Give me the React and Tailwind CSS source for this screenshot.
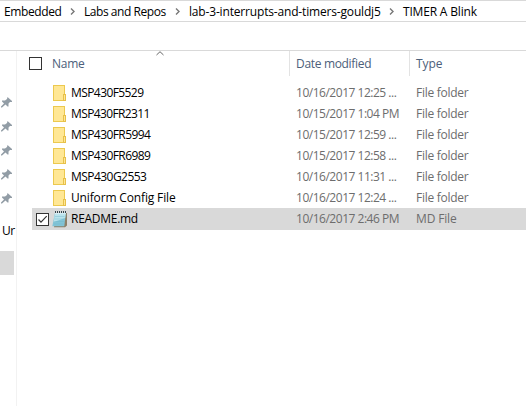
const files = [
  { name: 'MSP430F5529', date: '10/16/2017 12:25 ...', track: 'tracking-[-0.58px]', dateTrack: 'tracking-[-0.48px]' },
  { name: 'MSP430FR2311', date: '10/15/2017 1:04 PM', track: 'tracking-[-0.62px]', dateTrack: 'tracking-[-0.48px]' },
  { name: 'MSP430FR5994', date: '10/15/2017 12:59 ...', track: 'tracking-[-0.58px]', dateTrack: 'tracking-[-0.48px]' },
  { name: 'MSP430FR6989', date: '10/15/2017 12:58 ...', track: 'tracking-[-0.58px]', dateTrack: 'tracking-[-0.48px]' },
  { name: 'MSP430G2553', date: '10/16/2017 11:31 ...', track: 'tracking-[-0.54px]', dateTrack: 'tracking-[-0.48px]' },
  { name: 'Uniform Config File', date: '10/16/2017 12:24 ...', track: 'tracking-[-0.15px]', dateTrack: 'tracking-[-0.48px]' },
];

const pins = [0, 1, 2, 3, 4];

function Folder() {
  return (
    <svg width="13" height="16" viewBox="0 0 13 16" className="shrink-0">
      <rect x="0.5" y="0.5" width="11" height="15" fill="#ffe795" stroke="#ecc94f" />
      <rect x="10.5" y="9.5" width="2" height="6" fill="#ffe795" stroke="#e7c04a" />
    </svg>
  );
}

function Notepad() {
  return (
    <svg width="16" height="17" viewBox="0 0 16 17" className="shrink-0">
      <path d="M4 2H15V14.5L13 16.3H2Z" fill="#8d8069" />
      <path d="M3 2H13.8L12.3 15.3H0.3Z" fill="#82c4d6" />
      <path d="M3 2H13.8L13.2 7L1.8 11Z" fill="#b9e3ec" />
      <path d="M3 5.5H12.5M2.5 8H12M2.2 10.5H12M2 13H11.5" stroke="#6fb7cb" strokeWidth="0.4" />
      <path d="M3 1H14" stroke="#35464e" strokeWidth="2" strokeDasharray="1 1" />
      <path d="M3 2.7H14" stroke="#e9f7f9" strokeWidth="0.7" />
    </svg>
  );
}

function Pin() {
  return (
    <svg width="11" height="11" viewBox="0 0 11 11" className="block">
      <path d="M6.5 0L11 4V5H9L7.5 6.5V9.5H6.5L4.5 7.5L1 10.5H0V9.5L3 6.5L1 4.5V3.5H4L6 2Z" fill="#929da6" />
    </svg>
  );
}

function Chevron() {
  return (
    <svg width="5" height="7" viewBox="0 0 5 7" className="shrink-0">
      <path d="M1 0.5L4 3.5L1 6.5" fill="none" stroke="#777" strokeWidth="1.4" />
    </svg>
  );
}

function Check({ checked }) {
  return (
    <svg width="13" height="13" viewBox="0 0 13 13" className="shrink-0">
      <rect x="0.5" y="0.5" width="12" height="12" fill="#fff" stroke="#333" />
      {checked && <path d="M2.5 6.5L5 9.2L10.7 3.2" fill="none" stroke="#333" strokeWidth="1.2" />}
    </svg>
  );
}

export default function App() {
  return (
    <div className="flex h-[406px] w-[526px] flex-col overflow-hidden bg-white font-['Open_Sans','Noto_Sans',sans-serif] text-[12px] leading-[21px] whitespace-nowrap text-black">
      <nav className="flex h-[22px] shrink-0 items-center border-y border-[#d9d9d9] pl-1">
        <span className="w-[66px] tracking-[-0.38px]">Embedded</span>
        <Chevron />
        <span className="ml-[9px] w-[91px] tracking-[-0.45px]">Labs and Repos</span>
        <Chevron />
        <span className="ml-[9px] w-[200px] tracking-[-0.17px]">lab-3-interrupts-and-timers-gouldj5</span>
        <Chevron />
        <span className="ml-[9px] tracking-[-0.18px]">TIMER A Blink</span>
      </nav>
      <div className="h-[29px] shrink-0 border-b border-[#d9d9d9]" />
      <div className="flex flex-1">
        <aside className="w-[17px] shrink-0 border-r border-[#f2f2f2] pt-[46px]">
          {pins.map((p) => (
            <div key={p} className="h-6 pl-px"><Pin /></div>
          ))}
          <div className="h-[34px] w-[14px] pt-[3px] pl-[2px] tracking-[-0.5px]">Ur</div>
          <div className="h-6 w-[14px] bg-[#d9d9d9]" />
        </aside>
        <main className="min-w-0 flex-1">
          <header className="flex h-[25px] text-[#4c607a]">
            <div className="relative flex w-[272px] items-center pl-3">
              <Check />
              <span className="ml-[10px] tracking-[-0.25px]">Name</span>
              <svg width="8" height="5" viewBox="0 0 8 5" className="absolute top-0 left-[139px]">
                <path d="M0.5 4L4 0.7L7.5 4" fill="none" stroke="#666" />
              </svg>
            </div>
            <div className="w-[120px] border-l border-[#e3e3e3] pt-[2px] pl-[6px] tracking-[-0.32px]">Date modified</div>
            <div className="border-l border-[#e3e3e3] pt-[2px] pl-[6px] tracking-[-0.1px]">Type</div>
          </header>
          <div className="pt-[6px] text-[#6d6d6d]">
            {files.map((f) => (
              <div key={f.name} className="flex h-[21px] items-center pl-9">
                <Folder />
                <div className={`ml-[5px] w-[225px] text-black ${f.track}`}>{f.name}</div>
                <div className={`w-[120px] ${f.dateTrack}`}>{f.date}</div>
                <div className="tracking-[-0.27px]">File folder</div>
              </div>
            ))}
            <div className="ml-[15px] flex h-[22px] items-center bg-[#d9d9d9] pl-1">
              <Check checked />
              <div className="ml-[3px] flex"><Notepad /></div>
              <div className="ml-[3px] w-[225px] pb-px tracking-[-0.28px] text-black">README.md</div>
              <div className="w-[120px] pb-px tracking-[-0.48px]">10/16/2017 2:46 PM</div>
              <div className="pb-px tracking-[-0.15px]">MD File</div>
            </div>
          </div>
        </main>
      </div>
    </div>
  );
}
